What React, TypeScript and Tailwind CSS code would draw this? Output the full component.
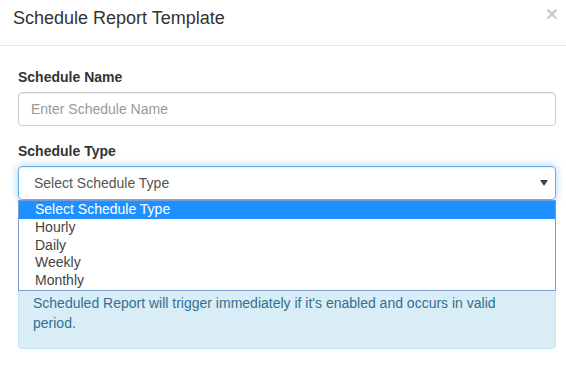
export default function App() {
  const options = ["Select Schedule Type", "Hourly", "Daily", "Weekly", "Monthly"];

  return (
    <div
      className="min-h-[382px] w-[566px] bg-white text-[14px] text-[#333]"
      style={{ fontFamily: '"Liberation Sans", Arial, sans-serif' }}
    >
      {/* Header */}
      <div className="flex h-[46px] items-start justify-between border-b border-[#e5e5e5] pl-[13px] pr-[8px]">
        <h4 className="mt-[5px] text-[18px] leading-[26px] text-[#333]">Schedule Report Template</h4>
        <button className="mt-[2px] text-[21px] font-bold leading-[24px] text-black opacity-20">×</button>
      </div>

      {/* Body */}
      <div className="pl-[18px] pr-[10px] pt-[21px]">
        <div className="mb-[15px]">
          <label className="mb-[5px] block text-[14px] font-bold leading-[20px]">Schedule Name</label>
          <input
            type="text"
            placeholder="Enter Schedule Name"
            className="block h-[34px] w-full rounded-[4px] border border-[#ccc] px-[12px] text-[14px] text-[#555] shadow-[inset_0_1px_1px_rgba(0,0,0,0.075)] outline-none placeholder:text-[#999]"
          />
        </div>

        <div className="mb-[15px]">
          <label className="mb-[5px] block text-[14px] font-bold leading-[20px]">Schedule Type</label>
          <div className="relative">
            <div className="flex h-[34px] items-center justify-between rounded-[4px] border border-[#66afe9] pl-[15px] pr-[7px] text-[14px] text-[#555] shadow-[inset_0_1px_1px_rgba(0,0,0,0.075),0_0_8px_rgba(102,175,233,0.6)]">
              <span>Select Schedule Type</span>
              <svg width="8" height="6" viewBox="0 0 8 6">
                <polygon points="0,0 8,0 4,6" fill="#444" />
              </svg>
            </div>

            {/* Native-like dropdown list */}
            <ul className="absolute left-0 right-0 top-full z-10 border border-[#7b9ad8] bg-white">
              {options.map((o, i) => (
                <li
                  key={o}
                  className={
                    i === 0
                      ? "bg-[#1e90ff] pl-[16px] text-[14px] leading-[17.8px] text-white"
                      : "pl-[16px] text-[14px] leading-[17.8px] text-[#444]"
                  }
                >
                  {o}
                </li>
              ))}
            </ul>
          </div>
        </div>

        {/* Info alert */}
        <div className="rounded-[4px] border border-[#bce8f1] bg-[#d9edf7] pb-[15px] pl-[14px] pr-[15px] pt-[77px] text-[#31708f]">
          <p className="max-w-[470px] text-[14px] leading-[20px]">
            Scheduled Report will trigger immediately if it's enabled and occurs in valid period.
          </p>
        </div>
      </div>
    </div>
  );
}
